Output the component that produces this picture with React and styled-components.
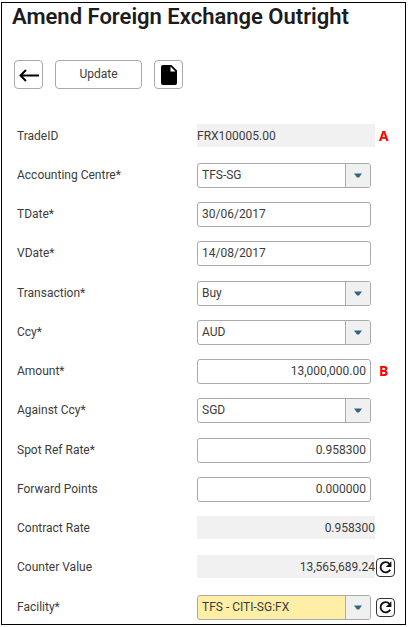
import React, { Component } from "react";

import styled, { createGlobalStyle } from "styled-components";

// fields, in the sections of the form
const sections = [
  [
    { id: "tradeId", label: "TradeID", value: "FRX100005.00", type: "readonly", mark: "A" },
    { id: "centre", label: "Accounting Centre*", value: "TFS-SG", type: "select" },
    { id: "tDate", label: "TDate*", value: "30/06/2017", type: "text" },
    { id: "vDate", label: "VDate*", value: "14/08/2017", type: "text" }
  ],
  [
    { id: "transaction", label: "Transaction*", value: "Buy", type: "select" },
    { id: "ccy", label: "Ccy*", value: "AUD", type: "select" },
    { id: "amount", label: "Amount*", value: "13,000,000.00", type: "text", number: true, mark: "B" },
    { id: "againstCcy", label: "Against Ccy*", value: "SGD", type: "select" }
  ],
  [
    { id: "spotRate", label: "Spot Ref Rate*", value: "0.958300", type: "text", number: true },
    { id: "forwardPoints", label: "Forward Points", value: "0.000000", type: "text", number: true },
    { id: "contractRate", label: "Contract Rate", value: "0.958300", type: "readonly", number: true },
    { id: "counterValue", label: "Counter Value", value: "13,565,689.24", type: "readonly", number: true, refresh: true }
  ],
  [
    { id: "facility", label: "Facility*", value: "TFS - CITI-SG:FX", type: "select", highlight: true, refresh: true }
  ]
];

const RefreshIcon = () => (
  <svg width="15" height="15" viewBox="0 0 15 15" fill="none" aria-hidden="true">
    <path d="M11.4 3.8A5.1 5.1 0 1 0 12.2 9.6" stroke="#111" strokeWidth="1.9" />
    <path d="M13.4 1.2V7H7.8Z" fill="#111" />
  </svg>
);

class FormRow extends Component {
  renderField() {
    const { id, value, type, number, highlight } = this.props.field;

    if (type === "select") {
      return (
        <SelectBox $highlight={highlight}>
          <Select id={id} defaultValue={value}>
            <option>{value}</option>
          </Select>
          <Arrow>
            <svg width="8" height="5" viewBox="0 0 8 5" aria-hidden="true">
              <path d="M0 0.5H8L5 4.5H3Z" fill="#2f6680" />
            </svg>
          </Arrow>
        </SelectBox>
      );
    }
    if (type === "readonly") {
      return <ReadOnly id={id} defaultValue={value} $number={number} />;
    }
    return <TextBox id={id} defaultValue={value} $number={number} />;
  }

  render() {
    const { id, label, type, mark, refresh } = this.props.field;
    return (
      <Row>
        <Label htmlFor={id}>{label}</Label>
        <Field $wide={type === "readonly"}>{this.renderField()}</Field>
        <Side>
          {mark && <Mark>{mark}</Mark>}
          {refresh && (
            <RefreshButton aria-label="Refresh">
              <RefreshIcon />
            </RefreshButton>
          )}
        </Side>
      </Row>
    );
  }
}

class App extends Component {
  render() {
    return (
      <Page>
        <GlobalStyle />
        <Title>Amend Foreign Exchange Outright</Title>
        <Toolbar>
          <IconButton aria-label="Back">
            <svg width="20" height="14" viewBox="0 0 20 14" fill="none" aria-hidden="true">
              <path d="M20 7.5H2M7 2L1.5 7.5L7 13" stroke="#000" strokeWidth="2" />
            </svg>
          </IconButton>
          <UpdateButton>Update</UpdateButton>
          <IconButton aria-label="New document">
            <svg width="16" height="20" viewBox="0 0 16 20" aria-hidden="true">
              <path
                d="M2 0H10.5L16 5.5V18A2 2 0 0 1 14 20H2A2 2 0 0 1 0 18V2A2 2 0 0 1 2 0ZM9.5 1.6V6.6H14.5Z"
                fill="#000"
                fillRule="evenodd"
              />
            </svg>
          </IconButton>
        </Toolbar>
        <Form onSubmit={e => e.preventDefault()}>
          {sections.map(fields => (
            <Section key={fields[0].id}>
              {fields.map(field => (
                <FormRow key={field.id} field={field} />
              ))}
            </Section>
          ))}
        </Form>
      </Page>
    );
  }
}
export default App;

const GlobalStyle = createGlobalStyle`
  * {
    box-sizing: border-box;
  }
  body {
    margin: 0;
    background: #fff;
    color: #3c3c3c;
    font-family: Roboto, "Liberation Sans", sans-serif;
    font-size: 12px;
  }
  button, input, select {
    font: inherit;
    color: inherit;
    margin: 0;
  }
`;

const Page = styled.main`
  margin: 2px 2px 2px 1px;
  border: 1px solid #000;
`;

const Title = styled.h1`
  margin: 0;
  padding: 0 10px;
  font-size: 22px;
  font-weight: 600;
  line-height: 28px;
  color: #1c1c1c;
`;

const Toolbar = styled.div`
  display: flex;
  gap: 12px;
  padding: 29px 12px 35px;
`;

const Button = styled.button.attrs(() => ({
  type: "button"
}))`
  display: flex;
  align-items: center;
  justify-content: center;
  height: 29px;
  padding: 0;
  background: #fff;
  border: 1px solid #aaa;
  border-radius: 4px;
`;

const IconButton = styled(Button)`
  width: 29px;
`;

const UpdateButton = styled(Button)`
  width: 87px;
  padding-bottom: 2px;
`;

const Form = styled.form`
  display: flex;
  flex-direction: column;
  gap: 15px;
  padding-bottom: 4px;
`;

const Section = styled.div`
  display: flex;
  flex-direction: column;
  gap: 14px;
`;

const Row = styled.div`
  display: grid;
  grid-template-columns: 180px minmax(0, 1fr) 30px;
  min-height: 25px;
  padding-left: 15px;
`;

const Label = styled.label`
  line-height: 24px;
`;

const Field = styled.div`
  padding-right: ${props => (props.$wide ? "0" : "4px")};
`;

const TextBox = styled.input.attrs(() => ({
  type: "text"
}))`
  display: block;
  width: 100%;
  height: 25px;
  padding: 0 4px 2px;
  background: #fff;
  border: 1px solid #aaa;
  border-radius: 3px;
  text-align: ${props => (props.$number ? "right" : "left")};
`;

const ReadOnly = styled(TextBox).attrs(() => ({
  readOnly: true
}))`
  height: 23px;
  padding: 0;
  background: #f1f1f1;
  border: 0;
  border-radius: 0;
`;

const SelectBox = styled.div`
  display: grid;
  grid-template-columns: minmax(0, 1fr) 25px;
  height: 25px;
  background: ${props => (props.$highlight ? "#ffefa6" : "#fff")};
  border: 1px solid #aaa;
  border-radius: 3px;
  overflow: hidden;
`;

const Select = styled.select`
  grid-area: 1 / 1 / 2 / 3;
  appearance: none;
  padding: 0 30px 2px 4px;
  background: transparent;
  border: 0;
`;

const Arrow = styled.span`
  grid-area: 1 / 2 / 2 / 3;
  display: flex;
  align-items: center;
  justify-content: center;
  background: #f0f0f0;
  border-left: 1px solid #aaa;
  pointer-events: none;
`;

const Side = styled.div`
  display: flex;
  align-items: center;
  padding-left: 1px;
`;

const Mark = styled.span`
  align-self: flex-start;
  padding-left: 3px;
  font-family: "Open Sans", sans-serif;
  font-size: 14px;
  font-weight: 700;
  line-height: 23px;
  color: #f00;
`;

const RefreshButton = styled(Button)`
  width: 19px;
  height: 19px;
  border-color: #333;
`;
